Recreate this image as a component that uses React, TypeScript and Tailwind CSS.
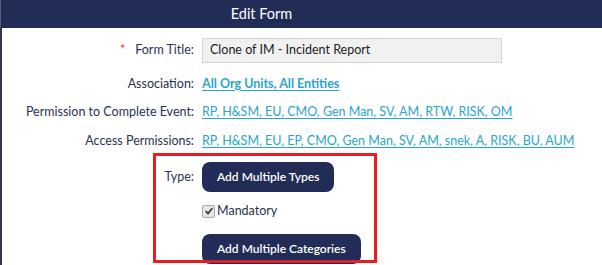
import { ReactNode } from 'react';

const labelCls = 'text-right text-[#2b3152]';
const linkCls = 'text-[#2aa5cc] underline underline-offset-2';

const Row = ({ label, children, required, className = '' }: { label: string; children: ReactNode; required?: boolean; className?: string }) => (
  <div className={`flex items-center ${className}`}>
    <div className={`w-[192px] shrink-0 ${labelCls}`}>
      {required && <span className="text-[#e8343a] mr-[10px]">*</span>}
      {label}
    </div>
    <div className="ml-[8px] flex items-center">{children}</div>
  </div>
);

export default function App() {
  return (
    <div className="relative w-[602px] h-[265px] overflow-hidden bg-white font-['Lato','Liberation_Sans',sans-serif] text-[12.5px]">
      <div className="h-[28px] bg-[#222d57] border-l border-[#5a5f6e] flex items-center justify-center pr-[80px]">
        <span className="text-white text-[14.5px] leading-none">Edit Form</span>
      </div>
      <div className="border-l-2 border-[#2d3650] h-[237px] pt-[10px]">
        <Row label="Form Title:" required className="h-[25px]">
          <div className="w-[300px] h-[25px] bg-[#f1f1f1] border border-[#d4d4d4] flex items-center px-[7px] text-[#222]">
            Clone of IM - Incident Report
          </div>
        </Row>
        <Row label="Association:" className="h-[20px] mt-[11px]">
          <a className={`${linkCls} font-bold`}>All Org Units, All Entities</a>
        </Row>
        <Row label="Permission to Complete Event:" className="h-[20px] mt-[8px]">
          <a className={linkCls}>RP, H&amp;SM, EU, CMO, Gen Man, SV, AM, RTW, RISK, OM</a>
        </Row>
        <Row label="Access Permissions:" className="h-[20px] mt-[9px]">
          <a className={linkCls}>RP, H&amp;SM, EU, EP, CMO, Gen Man, SV, AM, snek, A, RISK, BU, AUM</a>
        </Row>
        <Row label="Type:" className="h-[30px] mt-[11px]">
          <button className="h-[30px] px-[15px] rounded-[8px] bg-[#222d57] text-white text-[12px] font-semibold">Add Multiple Types</button>
        </Row>
        <Row label="" className="h-[20px] mt-[9px]">
          <label className="flex items-center gap-[2px] text-[#2b3152]">
            <span className="w-[13px] h-[13px] rounded-[2px] border border-[#a9a9a9] bg-[#e6e6e6] flex items-center justify-center">
              <svg viewBox="0 0 12 12" className="w-[10px] h-[10px]">
                <path d="M2 6.2 L4.8 9 L10 2.8" fill="none" stroke="#333" strokeWidth="2" />
              </svg>
            </span>
            Mandatory
          </label>
        </Row>
        <Row label="" className="h-[30px] mt-[13px]">
          <button className="h-[30px] px-[15px] rounded-[8px] bg-[#222d57] text-white text-[12px] font-semibold">Add Multiple Categories</button>
        </Row>
      </div>
      <div className="absolute left-[153px] top-[153px] w-[224px] h-[110px] border-[3px] border-[#e31e24]" />
    </div>
  );
}
